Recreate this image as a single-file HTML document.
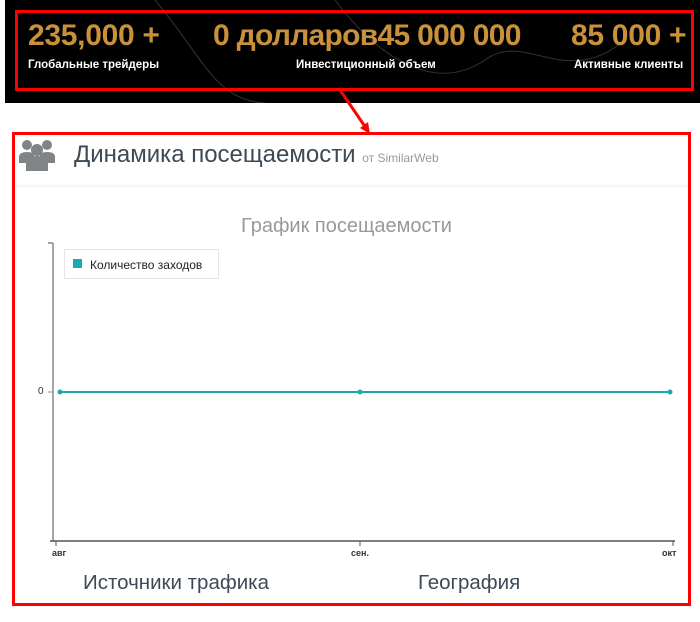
<!DOCTYPE html>
<html><head><meta charset="utf-8"><style>
body{margin:0;width:700px;height:622px;background:#fff;position:relative;overflow:hidden;font-family:"Liberation Sans",sans-serif}
.a{position:absolute}
.n{color:#c8913a;font-weight:bold;font-size:30px;letter-spacing:-0.3px}
.l{color:#fff;font-weight:bold;font-size:11.5px}
</style></head><body>
<div class="a" style="left:5px;top:0;width:695px;height:103px;background:#000"></div>
<svg class="a" style="left:5px;top:0" width="695" height="103"><path d="M150 0 C200 60 210 100 260 103 M330 0 C360 40 420 100 480 60 C520 30 560 90 620 40" stroke="#333" fill="none"/></svg>
<div class="a" style="left:15px;top:10px;width:673px;height:75px;border:3px solid #f00"></div>
<div class="a n" style="left:28px;top:19px">235,000 +</div>
<div class="a n" style="left:213px;top:19px;letter-spacing:-0.7px">0 долларов45 000 000</div>
<div class="a n" style="left:571px;top:19px">85 000 +</div>
<div class="a l" style="left:28px;top:59px">Глобальные трейдеры</div>
<div class="a l" style="left:296px;top:59px">Инвестиционный объем</div>
<div class="a l" style="left:574px;top:59px">Активные клиенты</div>
<svg class="a" style="left:0;top:0" width="700" height="622">
<line x1="340" y1="90" x2="366" y2="128" stroke="#f00" stroke-width="3"/>
<polygon points="370,134 360,128 368,122" fill="#f00"/>
<rect x="13.5" y="133.5" width="676" height="471" fill="none" stroke="#f00" stroke-width="3"/>
<line x1="16" y1="186" x2="688" y2="186" stroke="#eee"/>
<g fill="#7f8487"><circle cx="27" cy="145" r="5"/><circle cx="47" cy="145" r="5"/><circle cx="37" cy="150" r="6"/><path d="M19 163v-6q0-5 8-5q6 0 7 3l0 8z"/><path d="M40 163v-8q1-3 7-3q8 0 8 5v6z"/><path d="M26 171v-9q0-6 11-6q11 0 11 6v9z"/></g>
<line x1="53" y1="243" x2="53" y2="541" stroke="#888" stroke-width="1.5"/>
<line x1="48" y1="243" x2="53" y2="243" stroke="#888" stroke-width="1.5"/>
<line x1="48" y1="392" x2="53" y2="392" stroke="#888"/>
<line x1="50" y1="541" x2="675" y2="541" stroke="#555" stroke-width="1.5"/>
<g stroke="#555"><line x1="56" y1="541" x2="56" y2="546"/><line x1="360" y1="541" x2="360" y2="546"/><line x1="673" y1="541" x2="673" y2="546"/></g>
<line x1="60" y1="392" x2="670" y2="392" stroke="#1aa9b0" stroke-width="2"/>
<g fill="#1aa9b0"><circle cx="60" cy="392" r="2.5"/><circle cx="360" cy="392" r="2.5"/><circle cx="670" cy="392" r="2.5"/></g>
<rect x="64.5" y="249.5" width="154" height="29" fill="#fff" stroke="#e6e6e6"/>
<rect x="73" y="259" width="9" height="9" fill="#1aa9b0"/>
</svg>
<div class="a" style="left:74px;top:141px;font-size:24px;color:#3d4a56">Динамика посещаемости <span style="font-size:12px;color:#999">от SimilarWeb</span></div>
<div class="a" style="left:241px;top:215px;font-size:20px;color:#999">График посещаемости</div>
<div class="a" style="left:90px;top:258px;font-size:12px;color:#222">Количество заходов</div>
<div class="a" style="left:38px;top:386px;font-size:10px;color:#333">0</div>
<div class="a" style="left:52px;top:548px;font-size:9px;font-weight:bold;color:#333">авг</div>
<div class="a" style="left:351px;top:548px;font-size:9px;font-weight:bold;color:#333">сен.</div>
<div class="a" style="left:662px;top:548px;font-size:9px;font-weight:bold;color:#333">окт</div>
<div class="a" style="left:83px;top:571px;font-size:20.5px;color:#3d4a56">Источники трафика</div>
<div class="a" style="left:418px;top:571px;font-size:20.5px;color:#3d4a56">География</div>
</body></html>
